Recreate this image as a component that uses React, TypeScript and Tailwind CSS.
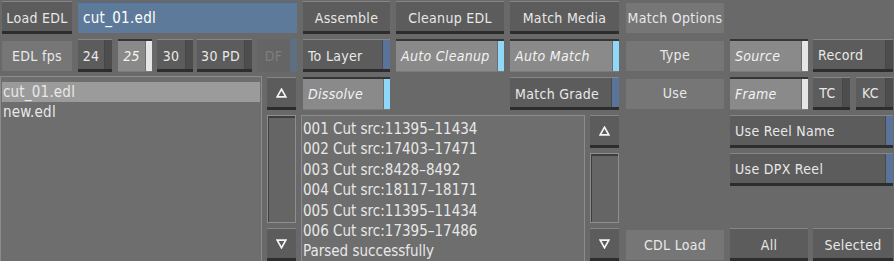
import React from 'react'

type Variant = 'plain' | 'split' | 'blue' | 'onCyan' | 'onWhite' | 'disabled'

const strip: Record<Variant, string> = {
  plain: '',
  split: 'w-[8px] bg-[#4d4d4d] border-l border-[#474747]',
  blue: 'w-[8px] bg-[#5a7398] border-l border-[#4a4a4a]',
  onCyan: 'w-[7px] bg-[#8fd8f8] border-l border-[#6e6e6e]',
  onWhite: 'w-[7px] bg-[#e6e6e6] border-l border-[#6e6e6e]',
  disabled: 'w-[7px] bg-[#5e6f84]',
}

const raised = 'bg-[#5c5c5c] border-t border-t-[#868686] border-b-[3px] border-b-[#2d2d2d] text-[#e8e8e8]'
const pressed = 'bg-[#8a8a8a] border-t-2 border-t-[#363636] border-b border-b-[#7a7a7a] text-[#f2f2f2] italic'

const body: Record<Variant, string> = {
  plain: raised,
  split: raised,
  blue: raised,
  onCyan: pressed,
  onWhite: pressed,
  disabled: 'bg-[#656565] text-[#7e7e7e]',
}

const textPad: Record<Variant, string> = {
  plain: 'pt-[3px]',
  split: 'pt-[3px]',
  blue: 'pt-[3px]',
  onCyan: 'pt-px',
  onWhite: 'pt-px',
  disabled: 'pt-px',
}

function Btn({
  children,
  className,
  variant = 'plain',
  left = false,
}: {
  children?: React.ReactNode
  className: string
  variant?: Variant
  left?: boolean
}) {
  return (
    <div className={`h-[33px] flex-none flex overflow-hidden text-[14px] tracking-[0.3px] ${body[variant]} ${className}`}>
      <div className={`flex-1 flex items-center whitespace-nowrap ${textPad[variant]} ${left ? 'pl-[5px]' : 'justify-center'}`}>
        {children}
      </div>
      {strip[variant] && <div className={strip[variant]}></div>}
    </div>
  )
}

function Label({ children }: { children: React.ReactNode }) {
  return (
    <div className="h-[30px] mt-[2px] w-full flex items-center justify-center bg-[#767676] text-[14px] tracking-[0.3px] text-[#e8e8e8] whitespace-nowrap">
      {children}
    </div>
  )
}

function Arrow({ up }: { up?: boolean }) {
  return (
    <Btn className="w-[29px]">
      <svg width="11" height="10" viewBox="0 0 11 10" className="-mt-[2px]">
        {up ? (
          <polygon points="5.5,1.2 9.8,8.8 1.2,8.8" fill="none" stroke="#f4f4f4" strokeWidth="1.7" />
        ) : (
          <polygon points="1.2,1.2 9.8,1.2 5.5,8.8" fill="none" stroke="#f4f4f4" strokeWidth="1.7" />
        )}
      </svg>
    </Btn>
  )
}

function ScrollBar({ track }: { track: string }) {
  return (
    <div className="w-[29px] flex flex-col gap-[5px] flex-none">
      <Arrow up />
      <div className={`${track} border border-[#8e8e8e] bg-[#656565]`}>
        <div className="h-full border-t-2 border-l border-[#3e3e3e]"></div>
      </div>
      <Arrow />
    </div>
  )
}

const edl = [
  '001 Cut src:11395\u201311434',
  '002 Cut src:17403\u201317471',
  '003 Cut src:8428\u20138492',
  '004 Cut src:18117\u201318171',
  '005 Cut src:11395\u201311434',
  '006 Cut src:17395\u201317486',
  'Parsed successfully',
]

export default function App() {
  return (
    <div className="w-[894px] h-[261px] overflow-hidden bg-[#696969] flex pt-px font-['DejaVu_Sans_Condensed','DejaVu_Sans',sans-serif] text-[#e8e8e8]">
      {/* left block */}
      <div className="w-[297px] flex-none flex flex-col gap-[5px]">
        <div className="flex gap-[6px] pl-[2px]">
          <Btn className="w-[70px]">Load EDL</Btn>
          <div className="h-[31px] mt-px flex-1 bg-[#5e7a9a] border-t border-[#51698a] flex items-center pl-[5px] text-[15px] tracking-[0.3px] text-white">
            cut_01.edl
          </div>
        </div>
        <div className="flex pl-[2px]">
          <div className="w-[70px] flex-none">
            <Label>EDL fps</Label>
          </div>
          <Btn variant="split" className="w-[34px] ml-[6px]">24</Btn>
          <Btn variant="onWhite" className="w-[34px] ml-[6px]">25</Btn>
          <Btn variant="split" className="w-[36px] ml-[5px]">30</Btn>
          <Btn variant="split" className="w-[55px] ml-[4px]">30 PD</Btn>
          <Btn variant="disabled" className="w-[40px] ml-[5px]">DF</Btn>
        </div>
        <div className="flex gap-[5px] -mt-px">
          <div className="w-[262px] h-[186px] flex-none border border-[#8c8c8c] bg-[#6e6e6e] pt-[5px] px-px text-[15px] tracking-[0.2px] leading-[20px]">
            <div className="bg-[#9b9b9b] pl-px">cut_01.edl</div>
            <div className="pl-px">new.edl</div>
          </div>
          <div className="mt-px">
            <ScrollBar track="h-[108px]" />
          </div>
        </div>
      </div>

      {/* middle block */}
      <div className="w-[316px] flex-none ml-[6px] flex flex-col gap-[5px]">
        <div className="flex gap-[6px]">
          <Btn className="w-[87px]">Assemble</Btn>
          <Btn className="w-[108px]">Cleanup EDL</Btn>
          <Btn className="w-[109px]">Match Media</Btn>
        </div>
        <div className="flex gap-[6px]">
          <Btn variant="blue" left className="w-[87px]">To Layer</Btn>
          <Btn variant="onCyan" left className="w-[108px]">Auto Cleanup</Btn>
          <Btn variant="onCyan" left className="w-[109px]">Auto Match</Btn>
        </div>
        <div className="flex gap-[6px]">
          <Btn variant="onCyan" left className="w-[87px]">Dissolve</Btn>
          <div className="w-[108px]"></div>
          <Btn variant="blue" left className="w-[109px]">Match Grade</Btn>
        </div>
        <div className="flex gap-[5px] -ml-[2px]">
          <div className="w-[284px] h-[150px] flex-none border border-[#8c8c8c] bg-[#6e6e6e] pt-[3px] pl-px text-[15px] leading-[20.4px] whitespace-nowrap overflow-hidden">
            {edl.map(l => (
              <div key={l}>{l}</div>
            ))}
          </div>
          <ScrollBar track="h-[70px]" />
        </div>
      </div>

      {/* options column */}
      <div className="w-[98px] flex-none ml-[7px] flex flex-col gap-[5px]">
        <div className="h-[33px]"><Label>Match Options</Label></div>
        <div className="h-[33px]"><Label>Type</Label></div>
        <div className="h-[33px]"><Label>Use</Label></div>
        <div className="h-[33px]"></div>
        <div className="h-[33px]"></div>
        <div className="h-[33px]"></div>
        <div className="h-[33px]"><Label>CDL Load</Label></div>
      </div>

      {/* right block */}
      <div className="w-[163px] flex-none ml-[6px] flex flex-col gap-[5px]">
        <div className="h-[33px]"></div>
        <div className="flex gap-[5px]">
          <Btn variant="onWhite" left className="w-[78px]">Source</Btn>
          <Btn variant="split" left className="w-[80px]">Record</Btn>
        </div>
        <div className="flex">
          <Btn variant="onWhite" left className="w-[78px]">Frame</Btn>
          <Btn variant="split" className="w-[37px] ml-[5px]">TC</Btn>
          <Btn variant="split" className="w-[37px] ml-[6px]">KC</Btn>
        </div>
        <Btn variant="blue" left className="w-[163px]">Use Reel Name</Btn>
        <Btn variant="blue" left className="w-[163px]">Use DPX Reel</Btn>
        <div className="h-[33px]"></div>
        <div className="flex gap-[5px]">
          <Btn className="w-[78px]">All</Btn>
          <Btn className="w-[80px]">Selected</Btn>
        </div>
      </div>
    </div>
  )
}
